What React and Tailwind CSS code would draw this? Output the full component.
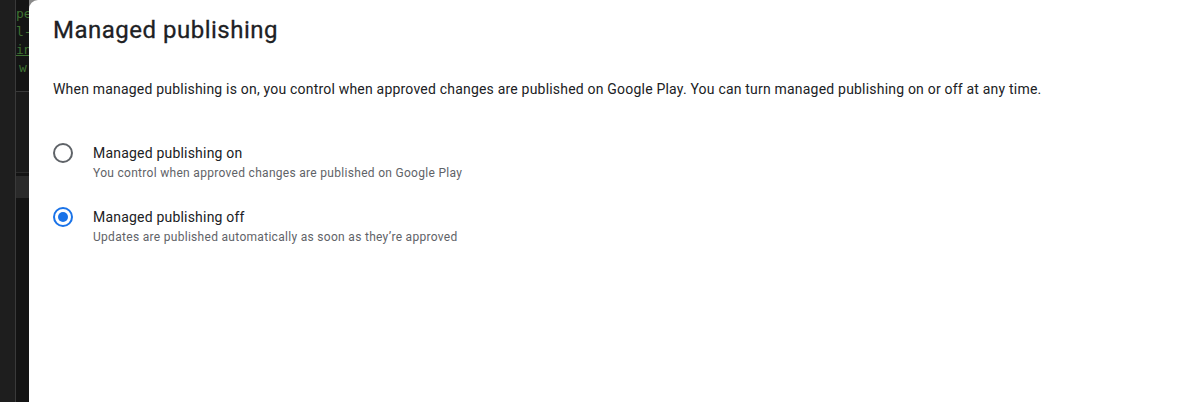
import React, { useState } from 'react';

const options = [
  {
    id: 'on',
    label: 'Managed publishing on',
    sub: 'You control when approved changes are published on Google Play',
  },
  {
    id: 'off',
    label: 'Managed publishing off',
    sub: 'Updates are published automatically as soon as they’re approved',
  },
];

function Radio({ checked }) {
  return (
    <span
      className={`w-[20px] h-[20px] rounded-full border-2 flex items-center justify-center shrink-0 ${
        checked ? 'border-[#1a73e8]' : 'border-[#5f6368]'
      }`}
    >
      {checked && <span className="w-[10px] h-[10px] rounded-full bg-[#1a73e8]" />}
    </span>
  );
}

export default function App() {
  const [selected, setSelected] = useState('off');

  return (
    <div className="flex h-[402px] w-[1195px] overflow-hidden bg-white" style={{ fontFamily: 'Roboto, "Liberation Sans", sans-serif' }}>
      {/* editor strip behind the dialog */}
      <div className="w-[16px] bg-[#1e1e1e] border-r border-[#3a3a3a]" />
      <div className="w-[13px] bg-[#141414] flex flex-col overflow-hidden" style={{ fontFamily: '"DejaVu Sans Mono", monospace' }}>
        <div className="pt-[5px] text-[13px] leading-[18px] text-[#3f7232] whitespace-nowrap">
          <div>pe</div>
          <div>l-</div>
          <div className="underline">in</div>
          <div className="pl-[3px]">w</div>
        </div>
        <div className="mt-[14px] border-t border-[#3a3a3a] h-[81px] bg-[#1a1a1a]" />
        <div className="border-t border-[#2c2c2c] h-[4px]" />
        <div className="h-[22px] bg-[#2a2a2a]" />
        <div className="flex-1 bg-[#141414]" />
      </div>

      {/* dialog */}
      <div className="flex-1 bg-[#8a8a8a]">
        <div className="h-full bg-white rounded-tl-[9px] pl-[24px] pt-[14px]">
          <h1 className="text-[24px] leading-[32px] text-[#202124] font-normal tracking-[0.5px] [-webkit-text-stroke:0.3px_#202124]">Managed publishing</h1>
          <p className="mt-[33px] text-[14px] leading-[20px] text-[#202124] tracking-[0.2px]">
            When managed publishing is on, you control when approved changes are published on Google Play. You can turn managed publishing on or off at any time.
          </p>
          <div className="mt-[44px] flex flex-col gap-[25px]">
            {options.map((o) => (
              <button
                key={o.id}
                onClick={() => setSelected(o.id)}
                className="flex items-start gap-[20px] text-left"
              >
                <Radio checked={selected === o.id} />
                <span className="flex flex-col">
                  <span className="text-[14px] leading-[20px] text-[#202124] tracking-[0.2px]">{o.label}</span>
                  <span className="mt-[1px] text-[12px] leading-[18px] text-[#5f6368] tracking-[0.3px]">{o.sub}</span>
                </span>
              </button>
            ))}
          </div>
        </div>
      </div>
    </div>
  );
}
